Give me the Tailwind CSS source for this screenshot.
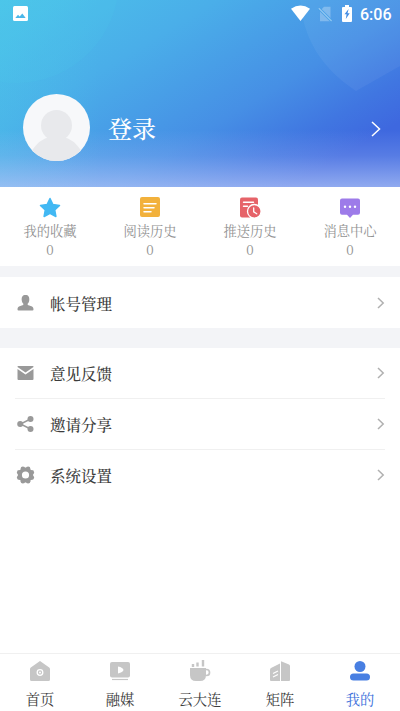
<!DOCTYPE html>
<html lang="zh-CN">
<head>
<meta charset="utf-8">
<meta name="viewport" content="width=device-width">
<title>我的</title>
<script src="https://cdn.jsdelivr.net/npm/@tailwindcss/browser@4"></script>
</head>
<body class="bg-white">
<div class="flex h-[711px] w-[400px] flex-col overflow-hidden bg-white font-['Noto_Serif_CJK_SC','Source_Han_Serif_SC','Noto_Sans_CJK_SC',serif] text-[#3c3c3c]">
  <header class="relative flex h-[187px] shrink-0 flex-col overflow-hidden">
    <svg class="absolute inset-0" width="400" height="187" viewBox="0 0 400 187">
      <defs>
        <linearGradient id="sky" gradientUnits="userSpaceOnUse" x1="0" y1="0" x2="158" y2="266">
          <stop offset="0" stop-color="#4cc4ea"/><stop offset=".36" stop-color="#4aaee9"/><stop offset=".7" stop-color="#468fe5"/><stop offset=".88" stop-color="#4076e1"/><stop offset="1" stop-color="#3e68df"/>
        </linearGradient>
        <linearGradient id="fade" x1="0" y1="0" x2="0" y2="1">
          <stop offset="0" stop-color="#b0c4f7" stop-opacity="0"/><stop offset=".45" stop-color="#b0c4f7" stop-opacity=".22"/><stop offset="1" stop-color="#b4c6f7" stop-opacity=".7"/>
        </linearGradient>
        <linearGradient id="tint" x1="0" y1="0" x2="1" y2="0"><stop offset="0" stop-color="#4cc8e8" stop-opacity=".3"/><stop offset=".25" stop-color="#4cc8e8" stop-opacity="0"/></linearGradient>
      </defs>
      <path d="M0 0H400V187H0z" fill="url(#sky)"/>
      <path d="M0 0H400V187H0z" fill="url(#tint)"/>
      <circle cx="16" cy="-20" r="103" fill="#4cceea" fill-opacity=".14"/>
      <path d="M300 0C303 38 321 68 356 91L400 66V0z" fill="#fff" fill-opacity=".05"/>
      <path d="M0 130H400V187H0z" fill="url(#fade)"/>
    </svg>
    <div class="relative flex h-7 items-center text-white">
      <svg class="ml-[13px] -mt-px" width="15" height="15" viewBox="0 0 15 15"><rect width="15" height="15" rx="1.5" fill="#fff"/><path d="M2.3 12 5 8.8l1.7 1.7L9.3 7.4l3.4 4.6z" fill="#4bb7e9"/></svg>
      <svg class="ml-[263px] -mt-0.5" width="19" height="16" viewBox="0 0 19 16"><path d="M0 3.8Q9.5-3 19 3.8L9.5 16z" fill="#fff"/></svg>
      <svg class="ml-2" width="15" height="16" viewBox="0 0 15 16"><path d="M6 .8h6.500v14.400H2V5z" fill="#fff" fill-opacity=".28"/><path d="M.8 2.200 13.600 15" stroke="#459fe7" stroke-width="2.800"/><path d="M.8 2.200 13.600 15" stroke="#fff" stroke-opacity=".4" stroke-width="1.400"/></svg>
      <svg class="ml-[9px] -mt-px" width="10" height="17" viewBox="0 0 10 17"><path d="M3 0h4v2h2q1 0 1 1v13q0 1-1 1H1q-1 0-1-1V3q0-1 1-1h2z" fill="#fff"/><path d="M6.6 4 2.500 9.300h2.100L3.800 14l3.900-5.800H5.500z" fill="#438ce3"/></svg>
      <span class="ml-2 mt-px font-['Roboto',sans-serif] text-[16px] font-medium leading-none">6:06</span>
    </div>
    <div class="relative mt-[65px] flex h-[68px] items-center pl-[23px] pr-[19px]">
      <svg width="67" height="67" viewBox="0 0 67 67"><defs><clipPath id="face"><circle cx="33.5" cy="33.5" r="33.5"/></clipPath></defs><circle cx="33.5" cy="33.5" r="33.5" fill="#f7f8fa"/><g clip-path="url(#face)" fill="#e8e9ec"><circle cx="33.5" cy="31.500" r="15.500"/><path d="M7 59Q17 44 27 43h13q10 1 20 16v8H7z"/></g></svg>
      <span class="ml-[18px] mt-0.5 text-2xl font-medium leading-none text-white">登录</span>
      <svg class="ml-auto mt-[3px]" width="10" height="16" viewBox="0 0 10 16" fill="none" stroke="#fff" stroke-width="1.500"><path d="m1 1 7.500 7L1 15"/></svg>
    </div>
  </header>

  <section class="grid h-[79px] shrink-0 grid-cols-4 pt-2.5 text-[13.300px] text-[#929292]">
    <div class="flex flex-col items-center"><svg width="22" height="22" viewBox="0 0 22 22"><path d="m11 1.500 2.900 6 6.600.9-4.800 4.600 1.200 6.500-5.900-3.100-5.900 3.100L6.300 13 1.500 8.400l6.600-.9z" fill="#42b8f3" stroke="#42b8f3" stroke-width="1.500" stroke-linejoin="round"/></svg><span class="mt-0.5 leading-5">我的收藏</span><span class="leading-[17px]">0</span></div>
    <div class="flex flex-col items-center"><svg width="22" height="22" viewBox="0 0 22 22"><rect x="1" width="20" height="20" rx="2" fill="#f2b13c"/><path d="M5 6.800h12M5 10.800h10M5 14.800h7" stroke="#fff" stroke-width="1.500" stroke-linecap="round"/></svg><span class="mt-0.5 leading-5">阅读历史</span><span class="leading-[17px]">0</span></div>
    <div class="flex flex-col items-center"><svg width="22" height="22" viewBox="0 0 22 22"><path d="M3 .5h14q2 0 2 2V10l-8 10.500H3q-2 0-2-2v-16q0-2 2-2z" fill="#e66369"/><path d="M4.500 5.300h10M4.500 9.300h4" stroke="#fff" stroke-width="1.400" stroke-linecap="round"/><circle cx="15.300" cy="14.300" r="6.800" fill="#e66369" stroke="#fff" stroke-width="1.300"/><path d="M14.700 11v3.800l3 2" fill="none" stroke="#fff" stroke-width="1.300" stroke-linecap="round"/></svg><span class="mt-0.5 leading-5">推送历史</span><span class="leading-[17px]">0</span></div>
    <div class="flex flex-col items-center"><svg width="22" height="22" viewBox="0 0 22 22"><path d="M3 1.500h16q2 0 2 2v12.300q0 2-2 2h-5L11 21l-3-3.200H3q-2 0-2-2V3.500q0-2 2-2z" fill="#9d7be9"/><g fill="#fff"><circle cx="6" cy="9.700" r="1.200"/><circle cx="11" cy="9.700" r="1.200"/><circle cx="16" cy="9.700" r="1.200"/></g></svg><span class="mt-0.5 leading-5">消息中心</span><span class="leading-[17px]">0</span></div>
  </section>

  <main class="flex-1 text-[15.500px] font-medium">
    <div class="border-t-[11px] border-[#f3f4f7]">
      <a class="flex h-[51px] items-center pl-[17px] pr-[15px]"><svg width="17" height="18" viewBox="0 0 17 18"><path d="M8.500 1C5.500 1 4.500 3 4.700 6c.1 2 1 3.200 1.800 4-.2 1.200-1 1.400-3.200 2C1.200 12.500.5 13.500.5 15.500q0 1 1 1h14q1 0 1-1c0-2-.7-3-2.800-3.500-2.200-.6-3-.8-3.200-2 .8-.8 1.700-2 1.800-4C12.500 3 11.500 1 8.500 1z" fill="#999"/></svg><span class="ml-4 mt-0.5">帐号管理</span><svg class="ml-auto" width="8" height="12" viewBox="0 0 8 12" fill="none" stroke="#b0b0b0" stroke-width="1.500"><path d="m1 1 5.200 5L1 11"/></svg></a>
    </div>
    <div class="border-t-[20px] border-[#f3f4f7] pl-[15px] pr-[15px]">
      <a class="flex h-[51px] items-center border-b border-[#f0f0f0] pl-0.5"><svg width="17" height="16" viewBox="0 0 17 16"><path d="M1 1h15q.5 0 .5 1l-8 5.500L.5 2q0-1 .5-1zM.5 4l8 5.500 8-5.500v10q0 1-1 1h-14q-1 0-1-1z" fill="#999"/></svg><span class="ml-4 mt-0.5">意见反馈</span><svg class="ml-auto" width="8" height="12" viewBox="0 0 8 12" fill="none" stroke="#b0b0b0" stroke-width="1.500"><path d="m1 1 5.200 5L1 11"/></svg></a>
      <a class="flex h-[51px] items-center border-b border-[#f0f0f0] pl-0.5"><svg width="17" height="18" viewBox="0 0 17 18"><path d="m13.500 4-10 5 10 5" fill="none" stroke="#999" stroke-width="1.400"/><g fill="#999"><circle cx="3.200" cy="9" r="3"/><circle cx="13.500" cy="4" r="3"/><circle cx="13.500" cy="14" r="3"/></g></svg><span class="ml-4 mt-0.5">邀请分享</span><svg class="ml-auto" width="8" height="12" viewBox="0 0 8 12" fill="none" stroke="#b0b0b0" stroke-width="1.500"><path d="m1 1 5.200 5L1 11"/></svg></a>
      <a class="flex h-[51px] items-center pl-0.5"><svg class="-mt-px overflow-visible" width="17" height="18" viewBox="0 0 17 18"><circle cx="8.500" cy="9" r="5.600" fill="none" stroke="#999" stroke-width="4"/><g fill="#999"><circle cx="14.800" cy="11.600" r="2.300"/><circle cx="11.100" cy="15.300" r="2.300"/><circle cx="5.900" cy="15.300" r="2.300"/><circle cx="2.200" cy="11.600" r="2.300"/><circle cx="2.200" cy="6.400" r="2.300"/><circle cx="5.900" cy="2.700" r="2.300"/><circle cx="11.100" cy="2.700" r="2.300"/><circle cx="14.800" cy="6.400" r="2.300"/></g></svg><span class="ml-4">系统设置</span><svg class="ml-auto -mt-px" width="8" height="12" viewBox="0 0 8 12" fill="none" stroke="#b0b0b0" stroke-width="1.500"><path d="m1 1 5.200 5L1 11"/></svg></a>
    </div>
  </main>

  <nav class="grid h-[58px] shrink-0 grid-cols-5 border-t border-[#f0f0f0] pt-1.5 text-[14.300px]">
    <a class="flex flex-col items-center"><svg width="24" height="24" viewBox="0 0 24 24"><path d="m12 1 9.200 6.500q.8.500.8 1.500v10.500q0 1.500-1.500 1.500h-17Q2 21 2 19.500V9q0-1 .8-1.500z" fill="#c6c6c6"/><circle cx="12" cy="12.500" r="2.800" fill="#c6c6c6" stroke="#fff" stroke-width="1.300"/><circle cx="12" cy="12.500" r="1" fill="#fff"/></svg><span class="mt-[5px] leading-5">首页</span></a>
    <a class="flex flex-col items-center"><svg width="24" height="24" viewBox="0 0 24 24"><rect x="2" y="2" width="20" height="15.500" rx="2" fill="#c6c6c6"/><path d="M4 19.500h16" stroke="#c6c6c6" stroke-width="1.200"/><path d="M10 6.500q5 1 5.500 3.500-.5 2.300-5.500 3.500z" fill="#fff"/></svg><span class="mt-[5px] leading-5">融媒</span></a>
    <a class="flex flex-col items-center"><svg width="24" height="24" viewBox="0 0 24 24"><path d="M2 8h16v7q0 6-6 6H8q-6 0-6-6z" fill="#c6c6c6"/><circle cx="18.500" cy="12.500" r="3" fill="none" stroke="#c6c6c6" stroke-width="1.700"/><path d="M5 4v3M9.500 2.500V6.500M15 0v6.500" stroke="#c6c6c6" stroke-width="2.400"/></svg><span class="mt-[5px] leading-5">云大连</span></a>
    <a class="flex flex-col items-center"><svg width="24" height="24" viewBox="0 0 24 24"><path d="M2 9.500q0-1 1-1.500l9-4.500V21H3q-1 0-1-1z" fill="#c6c6c6"/><path d="M13 1.200 21 4.500q1 .5 1 1.500v14q0 1-1 1h-8z" fill="#c6c6c6"/><path d="m5 13.500 5-2.500M5 17l5-2.500" stroke="#fff" stroke-width="1.200"/></svg><span class="mt-[5px] leading-5">矩阵</span></a>
    <a class="flex flex-col items-center text-[#3d71db]"><svg width="24" height="24" viewBox="0 0 24 24" fill="#487fe2"><circle cx="12" cy="6.500" r="5.500"/><rect x="2" y="13.500" width="20" height="7" rx="3.500"/></svg><span class="mt-[5px] leading-5">我的</span></a>
  </nav>
</div>
</body>
</html>
